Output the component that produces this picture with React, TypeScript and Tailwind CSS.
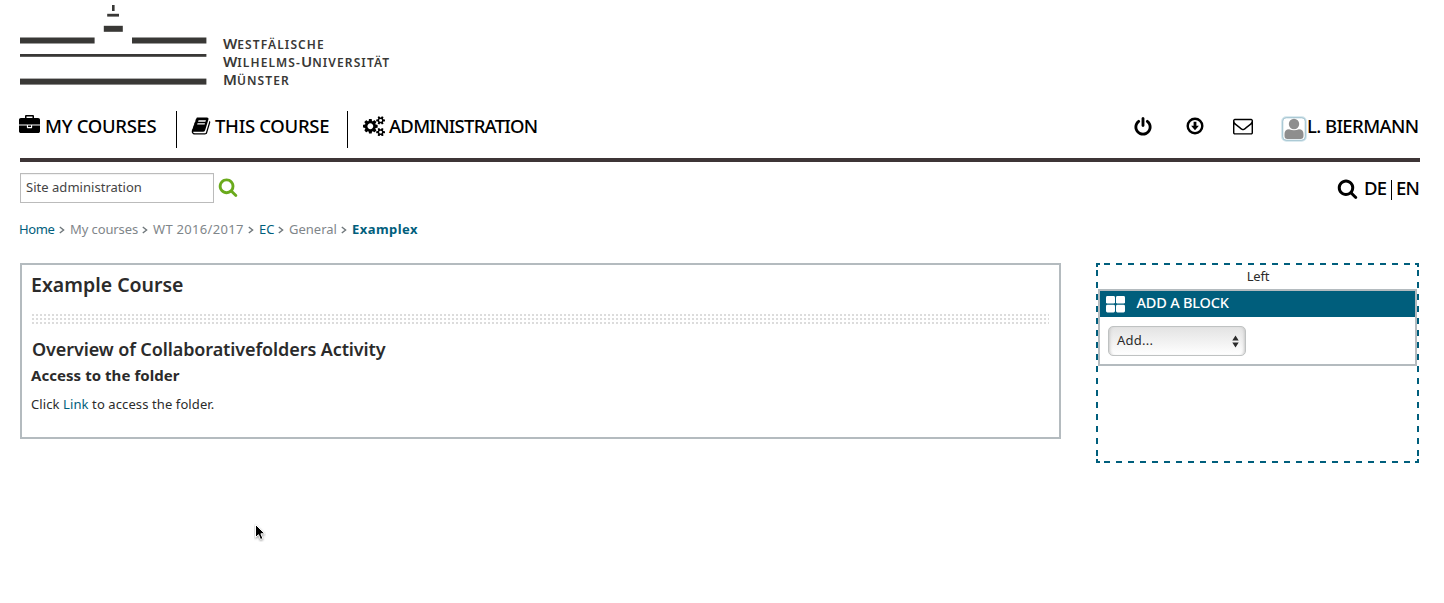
import React from "react";

const paths = {
  briefcase:
    "M640 256h512v-128h-512v128zm1152 640v480q0 66-47 113t-113 47h-1472q-66 0-113-47t-47-113v-480h672v160q0 26 19 45t45 19h320q26 0 45-19t19-45v-160h672zm-768 0v128h-256v-128h256zm768-480v384h-1792v-384q0-66 47-113t113-47h352v-160q0-40 28-68t68-28h576q40 0 68 28t28 68v160h352q66 0 113 47t47 113z",
  book: "M1703 478q40 57 18 129l-275 906q-19 64-76.5 107.5t-122.5 43.5h-923q-77 0-148.5-53.5t-99.5-131.5q-24-67-2-127 0-4 3-27t4-37q1-8-3-21.5t-3-19.5q2-11 8-21t16.5-23.5 16.5-23.5q23-38 45-91.5t30-91.5q3-10 .5-30t-.5-28q3-11 17-28t17-23q21-36 42-92t25-90q1-9-2.5-32t.5-28q4-13 22-30.5t22-22.5q19-26 42.5-84.5t27.5-96.5q1-8-3-25.5t-2-26.5q2-8 9-18t18-23 17-21q8-12 16.5-30.5t15-35 16-36 19.5-32 26.5-23.5 36-11.5 47.5 5.5l-1 3q38-9 51-9h761q74 0 114 56t18 130l-274 906q-36 119-71.5 153.5t-128.5 34.5h-869q-27 0-38 15-11 16-1 43 24 70 144 70h923q29 0 56-15.5t35-41.5l300-987q7-22 5-57 38 15 59 43zm-1064 2q-4 13 2 22.5t20 9.5h608q13 0 25.5-9.5t16.5-22.5l21-64q4-13-2-22.5t-20-9.5h-608q-13 0-25.5 9.5t-16.5 22.5zm-83 256q-4 13 2 22.5t20 9.5h608q13 0 25.5-9.5t16.5-22.5l21-64q4-13-2-22.5t-20-9.5h-608q-13 0-25.5 9.5t-16.5 22.5z",
  search:
    "M1216 832q0-185-131.5-316.5t-316.5-131.5-316.5 131.5-131.5 316.5 131.5 316.5 316.5 131.5 316.5-131.5 131.5-316.5zm512 832q0 52-38 90t-90 38q-54 0-90-38l-343-342q-179 124-399 124-143 0-273.5-55.5t-225-150-150-225-55.5-273.5 55.5-273.5 150-225 225-150 273.5-55.5 273.5 55.5 225 150 150 225 55.5 273.5q0 220-124 399l343 343q37 37 37 90z",
  power:
    "M1664 896q0 156-61 298t-164 245-245 164-298 61-298-61-245-164-164-245-61-298q0-182 80.5-343t226.5-270q43-32 95.5-25t83.5 50q32 42 24.5 94.5t-49.5 84.5q-98 74-151.5 181t-53.5 228q0 104 40.5 198.5t109.5 163.5 163.5 109.5 198.5 40.5 198.5-40.5 163.5-109.5 109.5-163.5 40.5-198.5q0-121-53.5-228t-151.5-181q-42-32-49.5-84.5t24.5-94.5q31-43 84-50t95 25q146 109 226.5 270t80.5 343zm-640-768v640q0 52-38 90t-90 38-90-38-38-90v-640q0-52 38-90t90-38 90 38 38 90z",
  envelope:
    "M1664 1504v-768q-32 36-69 66-268 206-426 338-51 43-83 67t-86.5 48.5-102.5 24.5h-2q-48 0-102.5-24.5t-86.5-48.5-83-67q-158-132-426-338-37-30-69-66v768q0 13 9.5 22.5t22.5 9.5h1472q13 0 22.5-9.5t9.5-22.5zm0-1051v-24.5l-.5-13-3-12.5-5.5-9-9-7.5-14-2.5h-1472q-13 0-22.5 9.5t-9.5 22.5q0 168 147 284 193 152 401 317 6 5 35 29.5t46 37.5 44.5 31.5 50.5 27.5 43 9h2q20 0 43-9t50.5-27.5 44.5-31.5 46-37.5 35-29.5q208-165 401-317 54-43 100.5-115.5t46.5-131.5zm128-37v1088q0 66-47 113t-113 47h-1472q-66 0-113-47t-47-113v-1088q0-66 47-113t113-47h1472q66 0 113 47t47 113z",
  cogs: "M896 896q0-106-75-181t-181-75-181 75-75 181 75 181 181 75 181-75 75-181zm768 512q0-52-38-90t-90-38-90 38-38 90q0 53 37.5 90.5t90.5 37.5 90.5-37.5 37.5-90.5zm0-1024q0-52-38-90t-90-38-90 38-38 90q0 53 37.5 90.5t90.5 37.5 90.5-37.5 37.5-90.5zm-384 421v185q0 10-7 19.5t-16 10.5l-155 24q-11 35-32 76 34 48 90 115 7 11 7 20 0 12-7 19-23 30-82.5 89.5t-78.5 59.5q-11 0-21-7l-115-90q-37 19-77 31-11 108-23 155-7 24-30 24h-186q-11 0-20-7.5t-10-17.5l-23-153q-34-10-75-31l-118 89q-7 7-20 7-11 0-21-8-144-133-144-160 0-9 7-19 10-14 41-53t47-61q-23-44-35-82l-152-24q-10-1-17-9.5t-7-19.5v-185q0-10 7-19.5t16-10.5l155-24q11-35 32-76-34-48-90-115-7-11-7-20 0-12 7-20 22-30 82-89t79-59q11 0 21 7l115 90q34-18 77-32 11-108 23-154 7-24 30-24h186q11 0 20 7.5t10 17.5l23 153q34 10 75 31l118-89q8-7 20-7 11 0 21 8 144 133 144 160 0 8-7 19-12 16-42 54t-45 60q23 48 34 82l152 23q10 2 17 10.5t7 19.5zm640 533v140q0 16-149 31-12 27-30 52 51 113 51 138 0 4-4 7-122 71-124 71-8 0-46-47t-52-68q-20 2-30 2t-30-2q-14 21-52 68t-46 47q-2 0-124-71-4-3-4-7 0-25 51-138-18-25-30-52-149-15-149-31v-140q0-16 149-31 13-29 30-52-51-113-51-138 0-4 4-7 4-2 35-20t59-34 30-16q8 0 46 46.5t52 67.5q20-2 30-2t30 2q51-71 92-112l6-2q4 0 124 70 4 3 4 7 0 25-51 138 17 23 30 52 149 15 149 31zm0-1024v140q0 16-149 31-12 27-30 52 51 113 51 138 0 4-4 7-122 71-124 71-8 0-46-47t-52-68q-20 2-30 2t-30-2q-14 21-52 68t-46 47q-2 0-124-71-4-3-4-7 0-25 51-138-18-25-30-52-149-15-149-31v-140q0-16 149-31 13-29 30-52-51-113-51-138 0-4 4-7 4-2 35-20t59-34 30-16q8 0 46 46.5t52 67.5q20-2 30-2t30 2q51-71 92-112l6-2q4 0 124 70 4 3 4 7 0 25-51 138 17 23 30 52 149 15 149 31z",
};

function Icon({ name, className, box = "0 0 1792 1792" }: { name: keyof typeof paths; className: string; box?: string }) {
  return (
    <svg viewBox={box} fill="currentColor" className={`shrink-0 ${className}`}>
      <path d={paths[name]} />
    </svg>
  );
}

function Logo() {
  return (
    <header className="flex h-[111px] shrink-0">
      <svg width="187" height="90" viewBox="0 0 187 90" fill="#393836" className="shrink-0">
        <rect x="92" y="5" width="2.6" height="6" />
        <rect x="87.2" y="13.8" width="11.8" height="2.8" />
        <rect x="83.8" y="25.8" width="19" height="6" />
        <rect x="0" y="37.5" width="74.6" height="6" />
        <rect x="112" y="37.5" width="74.4" height="6" />
        <rect x="0" y="54" width="186.4" height="2.8" />
        <rect x="0" y="78.6" width="186.4" height="6" />
      </svg>
      <div className="ml-4 mt-[33.5px] text-[15px] leading-[18px] font-semibold text-[#393836]">
        <SmallCaps words={[["W", "ESTFÄLISCHE"]]} />
        <SmallCaps words={[["W", "ILHELMS-"], ["U", "NIVERSITÄT"]]} />
        <SmallCaps words={[["M", "ÜNSTER"]]} />
      </div>
    </header>
  );
}

function SmallCaps({ words }: { words: string[][] }) {
  return (
    <div className="h-[18px] whitespace-nowrap">
      {words.map(([first, rest]) => (
        <React.Fragment key={first + rest}>
          {first}
          <span className="text-[12px] tracking-[1.1px]">{rest}</span>
        </React.Fragment>
      ))}
    </div>
  );
}

function NavBar() {
  return (
    <nav className="flex h-[51px] shrink-0 justify-between border-b-4 border-[#3d3536] text-[18.5px] leading-[30px] font-medium tracking-[-0.3px] text-black">
      <div className="flex h-[37px]">
        <div className="flex w-[157px] border-r border-black">
          <Icon name="briefcase" className="mt-1 mr-[5px] -ml-px h-[21px] w-[21px]" />
          <span className="whitespace-nowrap">MY COURSES</span>
        </div>
        <div className="flex w-[171px] border-r border-black pl-[14px]">
          <Icon name="book" className="mt-[5px] mr-1 h-5 w-5" />
          <span className="whitespace-nowrap">THIS COURSE</span>
        </div>
        <div className="flex pl-[15px]">
          <Icon name="cogs" box="0 0 1920 1792" className="mt-[4.5px] mr-1 h-[20.5px] w-[22px]" />
          <span className="tracking-[-0.75px] whitespace-nowrap">ADMINISTRATION</span>
        </div>
      </div>
      <div className="flex h-[37px]">
        <Icon name="power" className="mt-[5.5px] mr-[33px] h-5 w-5" />
        <svg viewBox="0 0 18 18" className="mt-[6px] mr-[29px] h-[18px] w-[18px] shrink-0">
          <circle cx="9" cy="9" r="7.3" fill="none" stroke="currentColor" strokeWidth="2.4" />
          <path d="M7.6 4.7h2.8v4.1h2.5L9 13.2 5.1 8.8h2.5z" fill="currentColor" />
        </svg>
        <Icon name="envelope" className="mt-[5px] mr-[28px] h-5 w-5" />
        <svg viewBox="0 0 26 26" className="mt-[4.5px] h-[26px] w-[26px] shrink-0">
          <rect x="1.2" y="1.2" width="23.6" height="23.6" rx="4" fill="#fff" stroke="#cfe3ea" strokeWidth="2" />
          <rect x="1.7" y="1.7" width="22.6" height="22.6" rx="3.5" fill="none" stroke="#a3c3d0" strokeWidth="1" />
          <circle cx="13" cy="8" r="5.2" fill="#8e8e8e" />
          <path d="M3.5 20v-2c0-3 1.6-4.8 4.6-4.8 2.9 1.3 6.9 1.3 9.8 0 3 0 4.6 1.8 4.6 4.8v2c0 1.8-1 3-2.8 3H6.3c-1.8 0-2.8-1.2-2.8-3z" fill="#8e8e8e" />
        </svg>
        <span className="w-[113px] tracking-[-0.6px] whitespace-nowrap">L. BIERMANN</span>
      </div>
    </nav>
  );
}

function SearchRow() {
  return (
    <div className="mt-[11px] flex h-[30px] shrink-0 justify-between">
      <div className="flex">
        <input
          defaultValue="Site administration"
          className="h-[30px] w-[194px] border border-[#bbbbbb] px-[5px] pb-[2px] text-[13px] tracking-[0.03px] text-[#444444] shadow-[inset_0_1px_1px_rgba(0,0,0,0.06)] outline-none"
        />
        <Icon name="search" className="mt-1 ml-1 h-5 w-5 text-[#6aaa1c]" />
      </div>
      <div className="flex text-[18.5px] leading-[30px] font-medium tracking-[-0.8px] text-black">
        <Icon name="search" className="mt-[5px] mr-[6px] h-[21px] w-[21px]" />
        <span className="w-[27px]">DE</span>
        <span className="mt-[7px] mr-[4px] h-5 w-px bg-black" />
        <span className="w-[24px]">EN</span>
      </div>
    </div>
  );
}

function Chevron() {
  return (
    <svg viewBox="0 0 6 8" fill="none" stroke="#6f777b" strokeWidth="1.4" className="mt-[7px] mr-[5px] h-2 w-[6px] shrink-0">
      <path d="M0.8 1l3.8 3-3.8 3" />
    </svg>
  );
}

function Breadcrumbs() {
  const link = "text-[#005e7c]";
  const plain = "text-[#7f868a]";
  return (
    <div className="mt-4 -ml-px flex h-5 shrink-0 text-[13px] leading-5 whitespace-nowrap">
      <span className={`w-[40px] tracking-[-0.4px] ${link}`}>Home</span>
      <Chevron />
      <span className={`w-[72px] tracking-[-0.1px] ${plain}`}>My courses</span>
      <Chevron />
      <span className={`w-[95px] tracking-[0.3px] ${plain}`}>WT 2016/2017</span>
      <Chevron />
      <span className={`w-[19px] ${link}`}>EC</span>
      <Chevron />
      <span className={`w-[52px] ${plain}`}>General</span>
      <Chevron />
      <span className={`font-bold tracking-[0.45px] ${link}`}>Examplex</span>
    </div>
  );
}

function CoursePanel() {
  return (
    <main className="h-[176px] w-[1041px] border-2 border-[#b4bbbf] px-[10px] text-[#2b2b2b]">
      <h1 className="mt-[5px] -ml-px text-[19.5px] leading-[30px] font-semibold">Example Course</h1>
      <div className="mt-[14px] h-[10px] bg-[conic-gradient(at_2px_2px,transparent_75%,#dcdcdc_0)] bg-[length:4px_4px]" />
      <h2 className="mt-[11px] text-[18px] leading-[28px] font-semibold tracking-[-0.1px]">
        Overview of Collaborativefolders Activity
      </h2>
      <h3 className="-ml-px text-[15px] leading-6 font-bold tracking-[0.05px]">Access to the folder</h3>
      <p className="mt-[6px] -ml-px text-[13px] leading-[22px] tracking-[0.1px]">
        Click <a className="text-[#005e7c]">Link</a> to access the folder.
      </p>
    </main>
  );
}

// Dashed outline with a 6px/12px rhythm on each side and solid 4px corners.
const dashes =
  "bg-[linear-gradient(90deg,#005e7c_4px,transparent_4px_319px,#005e7c_319px),linear-gradient(90deg,#005e7c_4px,transparent_4px_319px,#005e7c_319px),linear-gradient(180deg,#005e7c_4px,transparent_4px_196px,#005e7c_196px),linear-gradient(180deg,#005e7c_4px,transparent_4px_196px,#005e7c_196px),repeating-linear-gradient(90deg,#005e7c_0_6px,transparent_6px_12px),repeating-linear-gradient(90deg,#005e7c_0_6px,transparent_6px_12px),repeating-linear-gradient(180deg,#005e7c_0_6px,transparent_6px_12px),repeating-linear-gradient(180deg,#005e7c_0_6px,transparent_6px_12px)] bg-[size:323px_2px,323px_2px,2px_200px,2px_200px,348px_2px,348px_2px,2px_240px,2px_240px] bg-[position:0_0,0_198px,0_0,321px_0,-4px_0,-4px_198px,0_-5px,321px_-5px] bg-no-repeat";

function BlockRegion() {
  return (
    <aside className={`h-[200px] w-[323px] p-[2px] text-[#2b2b2b] ${dashes}`}>
      <div className="h-6 pl-px text-center text-[13px] leading-[22px] tracking-[-0.2px]">Left</div>
      <section className="h-[77px] w-[319px] border-2 border-[#b4bbbf] bg-white">
        <div className="flex h-[26px] bg-[#005e7c] pl-[6px] text-[14.5px] leading-[23px] font-medium tracking-[-0.2px] text-white">
          <svg viewBox="0 0 19 17" fill="currentColor" className="mt-[5px] mr-[11.5px] h-[17px] w-[19px]">
            <rect x="0" y="0" width="9" height="7.6" rx="1.4" />
            <rect x="10" y="0" width="9" height="7.6" rx="1.4" />
            <rect x="0" y="8.8" width="9" height="7.6" rx="1.4" />
            <rect x="10" y="8.8" width="9" height="7.6" rx="1.4" />
          </svg>
          ADD A BLOCK
        </div>
        <button className="mt-[9px] ml-2 flex h-[30px] w-[138px] items-center justify-between rounded-[5px] border border-[#bfc2c2] bg-linear-to-b from-[#e3e3e3] to-white pr-[6px] pl-2 text-[13px] shadow-[inset_3px_0_3px_-2px_#c8c8c8,inset_-3px_0_3px_-2px_#c8c8c8]">
          <span className="pb-px tracking-[0.25px]">Add...</span>
          <svg viewBox="0 0 7 13" fill="#2b2b2b" className="h-[13px] w-[7px]">
            <path d="M3.5 0.5L6.7 5.4H0.3zM3.5 12.5L0.3 7.6h6.4z" />
          </svg>
        </button>
      </section>
    </aside>
  );
}

export default function App() {
  return (
    <div className="relative flex h-[603px] w-[1444px] flex-col overflow-hidden bg-white pr-6 pl-5 font-['Noto_Sans',sans-serif]">
      <Logo />
      <NavBar />
      <SearchRow />
      <Breadcrumbs />
      <div className="mt-6 mr-[1px] flex justify-between">
        <CoursePanel />
        <BlockRegion />
      </div>
      <svg viewBox="0 0 12 19" className="absolute top-[523px] left-[254px] h-[19px] w-[12px]">
        <path d="M1.5 1.5v13l3-2.8 2 4.8 2.4-1-2-4.7h4z" fill="#000" stroke="#fff" strokeWidth="1" className="drop-shadow-[0_1px_1px_rgba(0,0,0,0.4)]" />
      </svg>
    </div>
  );
}
